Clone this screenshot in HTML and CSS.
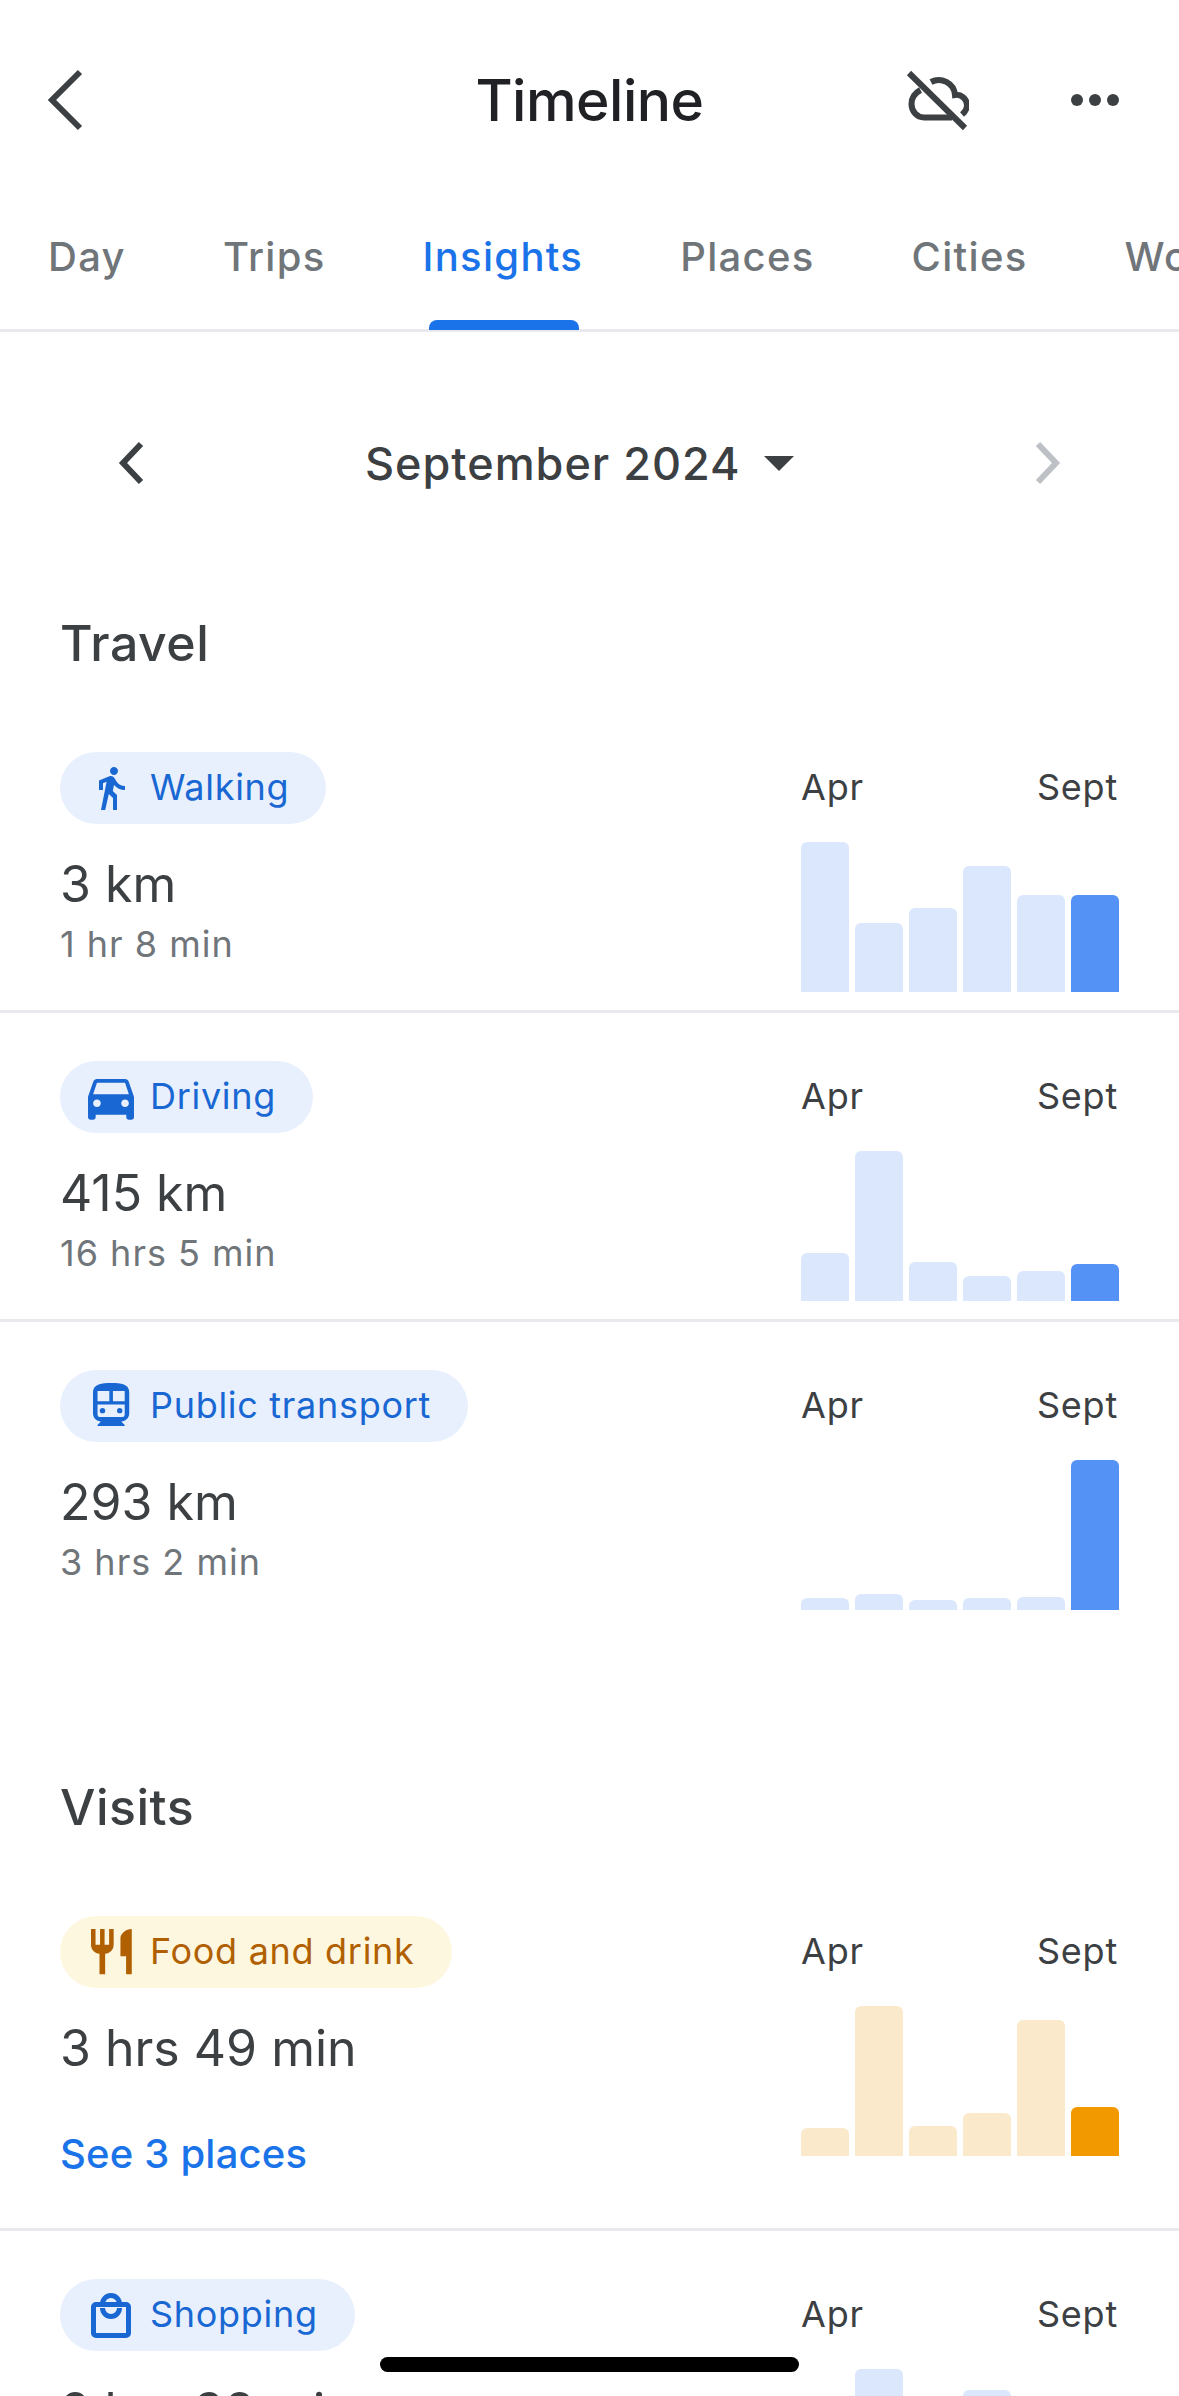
FILE: index.html
```html
<!DOCTYPE html>
<html>
<head>
    <title>Timeline</title>
    <link rel="stylesheet" href="styles.css">
</head>
<body>
<div class="page">
    <header class="topbar">
        <div class="topbar-left">
            <svg class="back-icon" viewBox="0 0 36 62"><path d="M32 3 4 31l28 28"/></svg>
        </div>
        <h1 class="title">Timeline</h1>
        <div class="topbar-right">
            <svg class="cloud-icon" viewBox="0 0 64 64">
                <path d="M15.5 22C10 25 6.5 30 6.5 36c0 7.5 5.500 13.500 12.500 13.500H47"/>
                <path d="M26 14c10-5.500 23 1 24 13 6-1 12 4 12 10 0 4-2 7-5 9.500"/>
                <path d="M4 5l56 55"/>
            </svg>
            <div class="dots"><span></span><span></span><span></span></div>
        </div>
    </header>

    <nav class="tabs">
        <div class="tab">Day</div>
        <div class="tab">Trips</div>
        <div class="tab active">Insights</div>
        <div class="tab">Places</div>
        <div class="tab">Cities</div>
        <div class="tab">Wo</div>
    </nav>

    <div class="month-row">
        <svg class="month-chevron" viewBox="0 0 28 44"><path d="M24 3 6 22l18 19"/></svg>
        <div class="month-label">
            <span>September 2024</span>
            <span class="caret"></span>
        </div>
        <svg class="month-chevron next" viewBox="0 0 28 44"><path d="M4 3l18 19L4 41"/></svg>
    </div>

    <section class="section">
        <h2 class="section-title">Travel</h2>

        <div class="row">
            <div class="info">
                <div class="pill">
                    <svg class="pill-icon" viewBox="0 0 24 24"><path d="M13.500 5.500c1.100 0 2-.9 2-2s-.9-2-2-2-2 .9-2 2 .9 2 2 2zM9.800 8.900 7 23h2.100l1.800-8 2.100 2v6h2v-7.500l-2.100-2 .6-3C14.800 12 16.800 13 19 13v-2c-1.900 0-3.500-1-4.300-2.400l-1-1.600c-.4-.6-1-1-1.700-1-.3 0-.5.1-.8.1L6 8.300V13h2V9.600l1.800-.7"/></svg>
                    <span>Walking</span>
                </div>
                <div class="value">3 km</div>
                <div class="sub">1 hr 8 min</div>
            </div>
            <div class="chart">
                <div class="chart-labels"><span>Apr</span><span>Sept</span></div>
                <div class="bars">
                    <div class="bar" style="height:150px"></div>
                    <div class="bar" style="height:69px"></div>
                    <div class="bar" style="height:84px"></div>
                    <div class="bar" style="height:126px"></div>
                    <div class="bar" style="height:97px"></div>
                    <div class="bar current" style="height:97px"></div>
                </div>
            </div>
        </div>

        <div class="row">
            <div class="info">
                <div class="pill">
                    <svg class="pill-icon" viewBox="2.6 2.65 18.8 18.8"><path d="M18.920 6.010C18.720 5.420 18.160 5 17.500 5h-11c-.66 0-1.210.42-1.420 1.010L3 12v8c0 .55.45 1 1 1h1c.55 0 1-.45 1-1v-1h12v1c0 .55.45 1 1 1h1c.55 0 1-.45 1-1v-8l-2.080-5.990zM6.500 16c-.83 0-1.500-.67-1.500-1.500S5.670 13 6.500 13s1.500.67 1.500 1.500S7.330 16 6.500 16zm11 0c-.83 0-1.500-.67-1.500-1.500s.67-1.500 1.500-1.500 1.500.67 1.500 1.500-.67 1.500-1.500 1.500zM5 11l1.500-4.500h11L19 11H5z"/></svg>
                    <span>Driving</span>
                </div>
                <div class="value">415 km</div>
                <div class="sub">16 hrs 5 min</div>
            </div>
            <div class="chart">
                <div class="chart-labels"><span>Apr</span><span>Sept</span></div>
                <div class="bars">
                    <div class="bar" style="height:48px"></div>
                    <div class="bar" style="height:150px"></div>
                    <div class="bar" style="height:39px"></div>
                    <div class="bar" style="height:25px"></div>
                    <div class="bar" style="height:30px"></div>
                    <div class="bar current" style="height:37px"></div>
                </div>
            </div>
        </div>

        <div class="row last">
            <div class="info">
                <div class="pill">
                    <svg class="pill-icon" viewBox="1.35 1.55 21.2 21.2">
                        <path d="M12 2C8 2 4 2.500 4 6v9.500C4 17.430 5.570 19 7.500 19L6 20.500v.5h12v-.5L16.500 19c1.930 0 3.500-1.570 3.500-3.500V6c0-3.500-3.580-4-8-4z"/>
                        <path class="hole" d="M6 5.500h5.200V10H6zM12.800 5.500H18V10h-5.200zM6 11.500h12V16a1 1 0 0 1-1 1H7a1 1 0 0 1-1-1z"/>
                        <circle cx="8.200" cy="14.200" r="1.200"/>
                        <circle cx="15.800" cy="14.200" r="1.200"/>
                    </svg>
                    <span>Public transport</span>
                </div>
                <div class="value">293 km</div>
                <div class="sub">3 hrs 2 min</div>
            </div>
            <div class="chart">
                <div class="chart-labels"><span>Apr</span><span>Sept</span></div>
                <div class="bars">
                    <div class="bar" style="height:12px"></div>
                    <div class="bar" style="height:16px"></div>
                    <div class="bar" style="height:10px"></div>
                    <div class="bar" style="height:12px"></div>
                    <div class="bar" style="height:13px"></div>
                    <div class="bar current" style="height:150px"></div>
                </div>
            </div>
        </div>
    </section>

    <section class="section visits">
        <h2 class="section-title">Visits</h2>

        <div class="row tall">
            <div class="info">
                <div class="pill orange">
                    <svg class="pill-icon" viewBox="1.23 1.56 21.2 21.2"><path d="M11 9H9V2H7v7H5V2H3v7c0 2.120 1.660 3.840 3.750 3.970V22h2.500v-9.030C11.340 12.840 13 11.120 13 9V2h-2v7zm5-3v8h2.500v8H21V2c-2.760 0-5 2.240-5 4z"/></svg>
                    <span>Food and drink</span>
                </div>
                <div class="value">3 hrs 49 min</div>
                <a class="link">See 3 places</a>
            </div>
            <div class="chart">
                <div class="chart-labels"><span>Apr</span><span>Sept</span></div>
                <div class="bars orange">
                    <div class="bar" style="height:28px"></div>
                    <div class="bar" style="height:150px"></div>
                    <div class="bar" style="height:30px"></div>
                    <div class="bar" style="height:43px"></div>
                    <div class="bar" style="height:136px"></div>
                    <div class="bar current" style="height:49px"></div>
                </div>
            </div>
        </div>

        <div class="row">
            <div class="info">
                <div class="pill">
                    <svg class="pill-icon bag" viewBox="0 0 48 48">
                        <rect x="6.500" y="13.500" width="35" height="31" rx="2.500"/>
                        <path d="M15.500 13a8.500 8.500 0 0 1 17 0"/>
                        <path d="M15.500 17a8.500 8.500 0 0 0 17 0"/>
                    </svg>
                    <span>Shopping</span>
                </div>
                <div class="value">2 hrs 38 min</div>
            </div>
            <div class="chart">
                <div class="chart-labels"><span>Apr</span><span>Sept</span></div>
                <div class="bars">
                    <div class="bar" style="height:60px"></div>
                    <div class="bar" style="height:150px"></div>
                    <div class="bar" style="height:40px"></div>
                    <div class="bar" style="height:129px"></div>
                    <div class="bar" style="height:70px"></div>
                    <div class="bar current" style="height:90px"></div>
                </div>
            </div>
        </div>
    </section>

    <div class="home-bar"></div>
</div>
</body>
</html>
```

FILE: styles.css
```css
* {
    box-sizing: border-box;
}

body {
    margin: 0;
    background: #fff;
    color: #3c4043;
    font-family: Inter, Roboto, sans-serif;
}

.page {
    position: relative;
    height: 2396px;
    overflow: hidden;
}

/* top bar */
.topbar {
    display: grid;
    grid-template-columns: 1fr auto 1fr;
    align-items: center;
    height: 200px;
    padding: 0 60px;
}

.back-icon {
    display: block;
    width: 36px;
    height: 62px;
    margin-left: -12px;
}

.back-icon path,
.month-chevron path {
    fill: none;
    stroke: #3c4043;
    stroke-width: 6;
}

.title {
    margin: 0;
    font-size: 57px;
    font-weight: 500;
    letter-spacing: -0.5px;
    color: #202124;
}

.topbar-right {
    display: flex;
    justify-content: flex-end;
    align-items: center;
    gap: 102px;
}

.cloud-icon {
    width: 64px;
    height: 64px;
}

.cloud-icon path {
    fill: none;
    stroke: #3c4043;
    stroke-width: 6;
}

.dots {
    display: flex;
    gap: 6px;
}

.dots span {
    width: 12px;
    height: 12px;
    border-radius: 50%;
    background: #3c4043;
}

/* tabs */
.tabs {
    display: flex;
    gap: 97px;
    padding: 30px 0 0 48px;
    height: 132px;
    border-bottom: 3px solid #e8eaed;
    white-space: nowrap;
}

.tab {
    position: relative;
    height: 100px;
    line-height: 54px;
    font-size: 40px;
    font-weight: 500;
    letter-spacing: 1.3px;
    color: #70757a;
}

.tab.active {
    color: #1a73e8;
}

.tab.active::after {
    content: "";
    position: absolute;
    left: 6px;
    right: 4px;
    bottom: 0;
    height: 10px;
    border-radius: 8px 8px 0 0;
    background: #1a73e8;
}

/* month picker */
.month-row {
    display: flex;
    align-items: center;
    height: 60px;
    margin-top: 101px;
    padding: 0 117px 0 117px;
}

.month-chevron {
    width: 28px;
    height: 44px;
}

.month-chevron.next {
    margin-left: auto;
}

.month-chevron.next path {
    stroke: #bdc1c6;
}

.month-label {
    display: flex;
    align-items: center;
    gap: 23px;
    margin-left: 220px;
    font-size: 45px;
    font-weight: 500;
    letter-spacing: 1px;
}

.caret {
    width: 0;
    height: 0;
    border-left: 15px solid transparent;
    border-right: 15px solid transparent;
    border-top: 15px solid #3c4043;
}

/* sections */
.section {
    margin-top: 120px;
}

.section.visits {
    margin-top: 149px;
}

.section-title {
    margin: 0 0 31px;
    padding-left: 60px;
    line-height: 60px;
    font-size: 50px;
    font-weight: 500;
    letter-spacing: 0.5px;
}

.row {
    display: flex;
    justify-content: space-between;
    align-items: flex-start;
    padding: 48px 60px 18px;
    border-bottom: 3px solid #e8eaed;
}

.row.last {
    border-bottom: none;
}

.row.tall {
    padding-bottom: 49px;
}

.pill {
    display: inline-flex;
    align-items: center;
    gap: 15px;
    height: 72px;
    padding: 0 37px 0 27px;
    border-radius: 36px;
    background: #e8f0fe;
    color: #1967d2;
    font-size: 36px;
    letter-spacing: 0.7px;
}

.pill span {
    padding-bottom: 2px;
}

.pill.orange {
    background: #fef7e0;
    color: #b06000;
}

.pill-icon {
    width: 48px;
    height: 48px;
    fill: currentColor;
}

.pill-icon .hole {
    fill: #e8f0fe;
}

.pill-icon.bag {
    fill: none;
    stroke: currentColor;
    stroke-width: 5;
}

.value {
    margin-top: 30px;
    line-height: 60px;
    font-size: 50px;
}

.sub {
    margin-top: 8px;
    line-height: 44px;
    font-size: 36px;
    letter-spacing: 1px;
    color: #70757a;
}

.link {
    display: block;
    margin-top: 51px;
    line-height: 50px;
    font-size: 40px;
    font-weight: 500;
    letter-spacing: 0.2px;
    color: #1a73e8;
}

/* monthly charts */
.chart {
    width: 318px;
}

.chart-labels {
    display: flex;
    justify-content: space-between;
    padding-right: 1px;
    line-height: 70px;
    font-size: 36px;
    letter-spacing: 0.8px;
}

.bars {
    display: flex;
    align-items: flex-end;
    gap: 6px;
    height: 150px;
    margin-top: 20px;
}

.bar {
    width: 48px;
    border-radius: 6px 6px 0 0;
    background: #dbe7fc;
}

.bar.current {
    background: #5592f5;
}

.bars.orange .bar {
    background: #fbe9cc;
}

.bars.orange .bar.current {
    background: #f29900;
}

/* iOS home indicator, sits on top of the content */
.home-bar {
    position: absolute;
    left: 380px;
    top: 2357px;
    width: 419px;
    height: 15px;
    border-radius: 8px;
    background: #000;
}
```
